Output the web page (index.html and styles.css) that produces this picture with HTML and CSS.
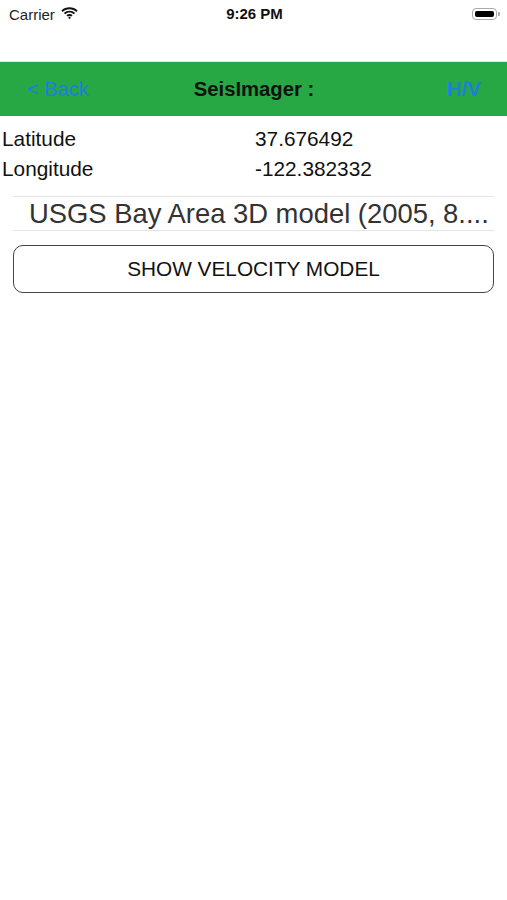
FILE: index.html
```html
<!DOCTYPE html>
<html lang="en">
  <head>
    <meta charset="UTF-8" />
    <meta name="viewport" content="width=device-width, initial-scale=1.0" />
    <title>SeisImager</title>
    <link rel="stylesheet" href="styles.css">
  </head>
  <body>
    <!-- Status bar -->
    <div class="status-bar">
      <div class="carrier">
        Carrier
        <svg class="wifi" width="17" height="12" viewBox="0 0 17 12">
          <path d="M8.5 2.2c2.6 0 5 1 6.8 2.7l1.3-1.4C14.5 1.5 11.6.3 8.5.3S2.5 1.5.4 3.5l1.3 1.4C3.5 3.2 5.9 2.2 8.5 2.2z" fill="#111" />
          <path d="M8.5 5.6c1.6 0 3.1.6 4.3 1.7l1.3-1.4C12.6 4.5 10.6 3.7 8.5 3.7S4.4 4.5 2.9 5.9l1.3 1.4c1.2-1.1 2.7-1.7 4.3-1.7z" fill="#111" />
          <path d="M8.5 8.9c.7 0 1.300.3 1.8.7l1.3-1.4c-.8-.8-1.9-1.2-3.1-1.2s-2.3.4-3.1 1.2l1.3 1.4c.5-.4 1.1-.7 1.8-.7z" fill="#111" />
          <circle cx="8.5" cy="10.8" r="1.1" fill="#111" />
        </svg>
      </div>
      <div class="clock">9:26 PM</div>
      <div class="battery">
        <div class="battery-body"><div class="battery-level"></div></div>
        <div class="battery-tip"></div>
      </div>
    </div>

    <!-- Navigation bar -->
    <div class="nav-bar">
      <span class="nav-link">&lt; Back</span>
      <span class="nav-title">SeisImager :</span>
      <span class="nav-link nav-right">H/V</span>
    </div>

    <!-- Location -->
    <div class="coords">
      <div class="coord-row">
        <span class="coord-label">Latitude</span>
        <span class="coord-value">37.676492</span>
      </div>
      <div class="coord-row">
        <span class="coord-label">Longitude</span>
        <span class="coord-value">-122.382332</span>
      </div>
    </div>

    <!-- Model picker -->
    <div class="picker">
      <div class="picker-item">USGS Bay Area 3D model (2005, 8....</div>
    </div>

    <button class="show-btn">SHOW VELOCITY MODEL</button>
  </body>
</html>
```

FILE: styles.css
```css
body {
  margin: 0;
  background: #fff;
  font-family: "Liberation Sans", Arial, sans-serif;
  color: #111;
}
.status-bar {
  height: 61px;
  display: grid;
  grid-template-columns: 1fr auto 1fr;
  align-items: start;
  padding: 5px 7px 0 9px;
  box-sizing: border-box;
  font-size: 15px;
}
.carrier {
  display: flex;
  align-items: center;
  gap: 6px;
  color: #222;
  height: 18px;
}
.wifi {
  margin-top: -2px;
}
.clock {
  font-weight: bold;
  font-size: 15px;
  height: 18px;
  line-height: 18px;
}
.battery {
  display: flex;
  align-items: center;
  justify-content: flex-end;
  height: 18px;
}
.battery-body {
  width: 25px;
  height: 12px;
  border: 1px solid #aaa;
  border-radius: 4px;
  padding: 2px;
  box-sizing: border-box;
}
.battery-level {
  background: #000;
  border-radius: 2px;
  height: 100%;
}
.battery-tip {
  width: 2px;
  height: 4px;
  background: #aaa;
  border-radius: 0 1px 1px 0;
  margin-left: 1px;
}
.nav-bar {
  height: 54px;
  background: #28a745;
  display: flex;
  align-items: center;
  justify-content: space-between;
  padding: 0 26px 0 27px;
  border-top: 1px solid #d9efd9;
}
.nav-link {
  color: #1e7fde;
  font-size: 20px;
  width: 90px;
}
.nav-right {
  text-align: right;
  font-weight: bold;
  font-size: 20.5px;
}
.nav-title {
  font-weight: bold;
  font-size: 20.3px;
  color: #111;
}
.coords {
  padding: 8px 0 0 2px;
}
.coord-row {
  display: flex;
  height: 30px;
  align-items: center;
  font-size: 20.8px;
}
.coord-label {
  width: 253px;
}
.picker {
  margin: 12px 13px 0;
  border-top: 1px solid #e6e6e6;
  border-bottom: 1px solid #e6e6e6;
  height: 33px;
  display: flex;
  align-items: center;
}
.picker-item {
  padding-left: 16px;
  font-size: 27.4px;
  color: #333;
  white-space: nowrap;
}
.show-btn {
  display: block;
  width: 481px;
  height: 48px;
  margin: 14px 13px 0;
  background: #fff;
  border: 1px solid #444;
  border-radius: 10px;
  font-family: "Liberation Sans", Arial, sans-serif;
  font-size: 20.8px;
  color: #111;
}
```
